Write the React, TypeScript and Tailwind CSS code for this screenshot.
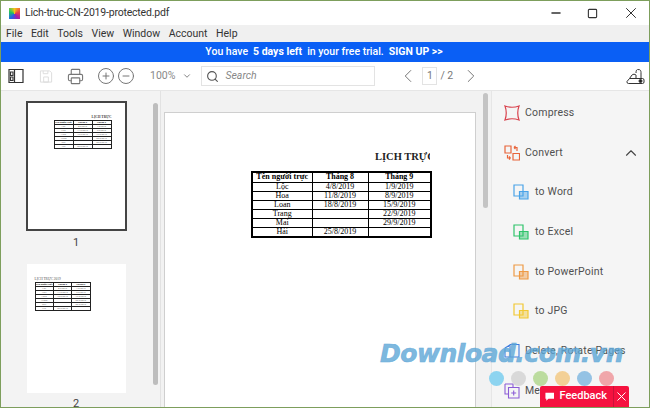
import { ChevronDown, ChevronLeft, ChevronRight, ChevronUp, CircleMinus, CirclePlus, Minus, Printer, Search, Square, X } from "lucide-react";

const rows = [
  ["Lộc", "4/8/2019", "1/9/2019"],
  ["Hoa", "11/8/2019", "8/9/2019"],
  ["Loan", "18/8/2019", "15/9/2019"],
  ["Trang", "", "22/9/2019"],
  ["Mai", "", "29/9/2019"],
  ["Hải", "25/8/2019", ""],
];

const menus = ["File", "Edit", "Tools", "View", "Window", "Account", "Help"];
const dots = ["bg-[#8dd4f0]", "bg-[#d9d9d9]", "bg-[#bcdc9f]", "bg-[#f3d096]", "bg-[#94c2e4]", "bg-[#f0a6aa]"];

function DocIcon({ color }: { color: string }) {
  return (
    <svg width="16" height="16" viewBox="0 0 16 16" fill="none" stroke={color} strokeWidth="1.2">
      <path d="M1 1h9v11H1z" />
      <path d="M6.500 7.500h8.500V15H6.500z" fill={color} fillOpacity="0.45" />
    </svg>
  );
}

function Row({ icon, label, sub, chevron }: { icon: React.ReactNode; label: string; sub?: boolean; chevron?: boolean }) {
  return (
    <div className={`flex h-[39.7px] shrink-0 items-center ${sub ? "pl-[21px]" : "pl-[12px]"}`}>
      <span className="flex w-[16px] justify-center">{icon}</span>
      <span className={`text-[10.5px] tracking-[0.2px] text-[#505050] ${sub ? "ml-[6px]" : "ml-[5px]"}`}>{label}</span>
      {chevron ? <ChevronUp className="ml-auto mr-[9px] text-[#444]" size={18} strokeWidth={1.1} absoluteStrokeWidth /> : null}
    </div>
  );
}

function MiniTable({ className }: { className: string }) {
  return (
    <table className={`table-fixed border-collapse border border-[#222] font-['Liberation_Serif',serif] text-[2.6px] leading-[3px] text-[#666] ${className}`}>
      <tbody>
        <tr className="h-[4px] border border-[#222] font-bold text-[#222]">
          <td className="border-x border-[#222] text-center">Tên người trực</td>
          <td className="border-x border-[#222] text-center">Tháng 8</td>
          <td className="border-x border-[#222] text-center">Tháng 9</td>
        </tr>
        {rows.map((r) => (
          <tr key={r[0]} className="h-[3px] border border-[#222]">
            {r.map((c, i) => (
              <td key={i} className="border-x border-[#222] text-center">{c}</td>
            ))}
          </tr>
        ))}
      </tbody>
    </table>
  );
}

export default function App() {
  return (
    <div className="relative flex h-[408px] w-[650px] flex-col overflow-hidden border border-[#7d9e5c] bg-white font-['Roboto',sans-serif] text-[#333]">
      {/* title bar */}
      <div className="flex h-[24px] shrink-0 items-center bg-white">
        <div className="ml-[8px] h-[11px] w-[11px] bg-[conic-gradient(#f5c518,#ef4444,#a21caf,#2563eb,#22c55e,#f5c518)]" />
        <span className="ml-[5px] text-[10.5px] tracking-[-0.2px] text-[#333]">Lich-truc-CN-2019-protected.pdf</span>
        <div className="ml-auto flex items-center text-[#333]">
          <Minus size={14} strokeWidth={1.3} absoluteStrokeWidth className="mr-[24px]" />
          <Square size={11} strokeWidth={1.1} absoluteStrokeWidth className="mr-[24px]" />
          <X size={18} strokeWidth={1} absoluteStrokeWidth className="mr-[9px]" />
        </div>
      </div>
      {/* menu */}
      <div className="flex h-[17px] shrink-0 items-center gap-[8.5px] bg-[#f0f0f0] pl-[5px] text-[10.5px] text-[#333]">
        {menus.map((m) => (
          <span key={m}>{m}</span>
        ))}
      </div>
      {/* trial banner */}
      <div className="flex h-[20px] shrink-0 items-center justify-center bg-[#0a5ff5] pr-[2px] text-[10.5px] font-medium text-white">
        <span>You have</span>
        <span className="mx-[5px] font-bold">5 days left</span>
        <span>in your free trial.</span>
        <span className="ml-[5px] font-bold">SIGN UP &gt;&gt;</span>
      </div>
      {/* toolbar */}
      <div className="flex h-[29px] shrink-0 items-center border-b border-[#e6e6e6] bg-white text-[#777]">
        <svg className="ml-[7px]" width="16" height="16" viewBox="0 0 16 16" fill="none" stroke="#333" strokeWidth="1.2">
          <path d="M1 1.500h14v13H1z" />
          <path d="M6.500 1.500v13" />
          <path d="M2.500 4h2.500v3.500H2.500zM2.500 9h2.500v3.500H2.500z" />
        </svg>
        <svg className="ml-[15px]" width="14" height="15" viewBox="0 0 15 15" fill="none" stroke="#dcdcdc" strokeWidth="1">
          <path d="M1.500 1.500h10l2 2v10h-12z" />
          <path d="M4.500 1.500v3h5v-3M5 8h5v5.500H5z" />
        </svg>
        <Printer className="ml-[14px]" size={17} strokeWidth={1.1} absoluteStrokeWidth />
        <CirclePlus className="ml-[13px]" size={18} strokeWidth={1} absoluteStrokeWidth />
        <CircleMinus className="ml-[2px]" size={18} strokeWidth={1} absoluteStrokeWidth />
        <span className="ml-[15px] text-[10.5px] text-[#888]">100%</span>
        <ChevronDown className="ml-[7px]" size={10} strokeWidth={0.9} absoluteStrokeWidth />
        <div className="ml-[9px] flex h-[20px] w-[174px] items-center border border-[#e3e3e3] pl-[4px]">
          <Search size={13} strokeWidth={1.1} absoluteStrokeWidth className="text-[#555]" />
          <span className="ml-[6px] text-[10.5px] italic text-[#888]">Search</span>
        </div>
        <ChevronLeft className="ml-[22px]" size={22} strokeWidth={1} absoluteStrokeWidth />
        <span className="ml-[3px] flex h-[18px] w-[15px] items-center justify-center border border-[#e3e3e3] text-[10.5px]">1</span>
        <span className="ml-[3px] text-[10.5px]">/ 2</span>
        <ChevronRight className="ml-[7px]" size={22} strokeWidth={1} absoluteStrokeWidth />
        <svg className="ml-auto mr-[4px]" width="19" height="15" viewBox="0 0 19 15" fill="none" stroke="#333" strokeWidth="1">
          <path d="M2.500 14.500h14a1.500 1.500 0 0 0 1.500-1.500v-2a1.500 1.500 0 0 0-1.500-1.500h-13L1 12.500v.5a1.500 1.500 0 0 0 1.500 1.500z" />
          <path d="M3.500 9.500L6 6c.5-1 3.500-1 4 0v3.500M10 4c0-4 2-4 3-3.500M12 .800c1-.5 3-.3 3 2.700v6" />
          <circle cx="14.500" cy="12" r="1.500" fill="#222" />
        </svg>
      </div>
      {/* main area */}
      <div className="flex min-h-0 flex-1">
        {/* thumbnails */}
        <div className="flex w-[159px] shrink-0 bg-[#f3f3f3]">
          <div className="flex w-[150px] flex-col items-center pt-[10px]">
            <div className="h-[130px] w-[101px] shrink-0 border-2 border-[#444] bg-white pl-[26px] pt-[12px]">
              <div className="w-[58px] text-right font-['Liberation_Serif',serif] text-[3.500px] font-bold leading-[5px] text-[#444]">LỊCH TRỰC</div>
              <MiniTable className="h-[22px] w-[58px]" />
            </div>
            <span className="mt-[4px] h-[16px] shrink-0 text-[11px] leading-[16px] text-[#444]">1</span>
            <div className="mt-[13px] h-[129px] w-[99px] shrink-0 bg-white pl-[8px] pt-[12px]">
              <div className="font-['Liberation_Serif',serif] text-[3.500px] leading-[6px] text-[#555]">LỊCH TRỰC 2019</div>
              <MiniTable className="h-[21px] w-[56px]" />
            </div>
            <span className="mt-[3px] h-[16px] shrink-0 text-[11px] leading-[16px] text-[#444]">2</span>
          </div>
          <div className="ml-[2px] mt-[12px] h-[282px] w-[5px] rounded-full bg-[#bdbdbd]" />
        </div>
        {/* document */}
        <div className="flex min-w-0 flex-1 overflow-hidden border-l border-[#e2e2e2] bg-[#f2f2f2]">
          <div className="ml-[3px] mt-[21px] h-[320px] w-[312px] shrink-0 border border-[#cfcfcf] bg-white pl-[86px] pt-[36px] font-['Liberation_Serif',serif] text-black">
            <div className="h-[22px] w-[179px] overflow-hidden whitespace-nowrap pl-[124px] text-[10.5px] font-bold leading-[16px] text-[#222]">LỊCH TRỰC</div>
            <table className="w-[179px] table-fixed border-collapse border-2 border-black text-[8px] leading-[8px]">
              <colgroup>
                <col className="w-[60px]" />
                <col className="w-[56px]" />
                <col className="w-[63px]" />
              </colgroup>
              <tbody>
                <tr className="h-[10px] border border-black font-bold">
                  <td className="border border-black text-center">Tên người trực</td>
                  <td className="border border-black text-center">Tháng 8</td>
                  <td className="border border-black text-center">Tháng 9</td>
                </tr>
                {rows.map((r) => (
                  <tr key={r[0]} className="h-[9px] border border-black">
                    {r.map((c, i) => (
                      <td key={i} className="border-x border-black text-center">{c}</td>
                    ))}
                  </tr>
                ))}
              </tbody>
            </table>
          </div>
          <div className="ml-[7px] mt-[2px] h-[115px] w-[5px] shrink-0 rounded-full bg-[#c4c4c4]" />
        </div>
        {/* tools panel */}
        <div className="flex w-[158px] shrink-0 flex-col overflow-hidden border-l border-[#e6e6e6] bg-[#f5f5f5] pt-[2px]">
          <Row
            label="Compress"
            icon={
              <svg width="16" height="16" viewBox="0 0 16 16" fill="none" stroke="#d9444f" strokeWidth="1.2">
                <path d="M1 1Q8 3.500 15 1Q12.500 8 15 15Q8 12.500 1 15Q3.500 8 1 1z" />
              </svg>
            }
          />
          <Row
            label="Convert"
            chevron
            icon={
              <svg width="16" height="16" viewBox="0 0 16 16" fill="none" stroke="#e8643a" strokeWidth="1.2">
                <path d="M1 1h6v7H1zM9 8.500h6.500V15H9z" />
                <path d="M10 2.500l1.500-1.500M10 2.500l1.500 1.500M10 2.500h3v3.500M6.500 13L5 11.500M6.500 13L5 14.500M6.500 13h-3v-3" />
              </svg>
            }
          />
          <Row sub label="to Word" icon={<DocIcon color="#4aa3e8" />} />
          <Row sub label="to Excel" icon={<DocIcon color="#2fc46b" />} />
          <Row sub label="to PowerPoint" icon={<DocIcon color="#ee9a45" />} />
          <Row sub label="to JPG" icon={<DocIcon color="#f2c833" />} />
          <Row
            label="Delete, Rotate Pages"
            icon={
              <svg width="16" height="16" viewBox="0 0 16 16" fill="none" stroke="#3f7de0" strokeWidth="1.1">
                <path d="M1 5l5-3v12H1zM6 1.500h9V14H6z" />
              </svg>
            }
          />
          <Row
            label="Merge Pages"
            icon={
              <svg width="16" height="16" viewBox="0 0 16 16" fill="none" stroke="#8b5cd6" strokeWidth="1.1">
                <path d="M1 1h8v3M1 1v10h3" />
                <path d="M4.500 4.500H15V15H4.500z" />
                <path d="M9.700 7.500v5M7.200 10h5" />
              </svg>
            }
          />
        </div>
      </div>
      {/* watermark */}
      <div className="absolute left-[379px] top-[339px] whitespace-nowrap font-['DejaVu_Sans',sans-serif] text-[25px] font-bold italic leading-[28px] tracking-[-0.5px] text-[#5aa5d6]/80 [-webkit-text-stroke:0.6px_#6aaedb]">
        Download.com.vn
      </div>
      <div className="absolute left-[488px] top-[370px] flex gap-[7px]">
        {dots.map((d) => (
          <span key={d} className={`h-[15px] w-[15px] rounded-full ${d}`} />
        ))}
      </div>
      {/* feedback */}
      <div className="absolute bottom-0 left-[539px] flex h-[21px] w-[89px] items-center rounded-t-[2px] bg-[#f5123f] text-[11px] font-medium text-white">
        <svg className="ml-[5px]" width="11" height="11" viewBox="0 0 11 11" fill="white">
          <path d="M0.500 1h10v7H4l-2.500 2.500V8h-1z" />
        </svg>
        <span className="ml-[5px]">Feedback</span>
        <span className="ml-[6px] flex h-full flex-1 items-center justify-center border-l border-[#c9123a]">
          <X size={15} strokeWidth={1} absoluteStrokeWidth />
        </span>
      </div>
    </div>
  );
}
